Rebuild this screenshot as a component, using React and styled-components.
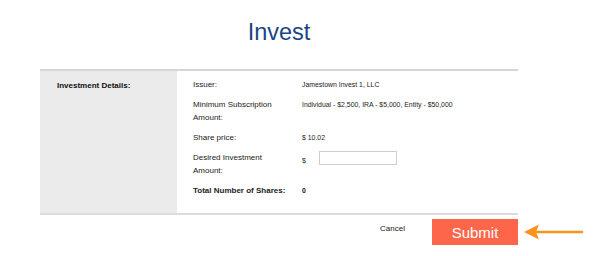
import React from "react";
import styled, { createGlobalStyle } from "styled-components";

const GlobalStyle = createGlobalStyle`
  body {
    margin: 0;
    background: #fff;
    font-family: "Liberation Sans", Arial, sans-serif;
    color: #111;
  }
`;

const Page = styled.div`
  width: 600px;
  height: 256px;
  padding-top: 17px;
  box-sizing: border-box;
`;

const Title = styled.h1`
  margin: 0 0 22px 0;
  width: 478px;
  margin-left: 40px;
  text-align: center;
  font-family: "Liberation Sans", Arial, sans-serif;
  font-weight: 400;
  font-size: 23.5px;
  line-height: 30px;
  color: #1a4585;
`;

const Card = styled.div`
  display: flex;
  width: 478px;
  margin-left: 40px;
  height: 146px;
  box-sizing: border-box;
  border-top: 2px solid #d6d6d6;
  border-bottom: 2px solid #dcdcdc;
`;

const Side = styled.div`
  width: 137px;
  background: #ebebeb;
  padding: 10px 0 0 17px;
  box-sizing: border-box;
  font-size: 8px;
  font-weight: bold;
`;

const Details = styled.div`
  flex: 1;
  display: grid;
  grid-template-columns: 109px 1fr;
  row-gap: 7px;
  align-content: start;
  padding: 7px 0 0 16px;
`;

const Label = styled.div`
  font-size: 8px;
  line-height: 13px;
  color: #222;
  font-weight: ${(p) => (p.$bold ? "bold" : "normal")};
`;

const Value = styled.div`
  display: flex;
  align-items: flex-start;
  font-size: 6.9px;
  line-height: 13px;
  color: #222;
  font-weight: ${(p) => (p.$bold ? "bold" : "normal")};
`;

const Currency = styled.span`
  margin-top: 3px;
`;

const AmountInput = styled.input`
  width: 78px;
  height: 14px;
  box-sizing: border-box;
  margin-left: 13px;
  border: 1px solid #cfcfcf;
  padding: 0 3px;
  font-size: 7px;
  outline: none;
`;

const Footer = styled.div`
  display: flex;
  justify-content: flex-end;
  align-items: flex-start;
  width: 478px;
  margin-left: 40px;
  margin-top: 4px;
`;

const CancelButton = styled.button`
  background: none;
  border: none;
  padding: 0;
  margin: 5px 27px 0 0;
  font-family: "Liberation Sans", Arial, sans-serif;
  font-size: 8px;
  color: #222;
  cursor: pointer;
`;

const SubmitWrap = styled.div`
  position: relative;
`;

const SubmitButton = styled.button`
  display: block;
  width: 86px;
  height: 26px;
  border: none;
  background: #fd664a;
  color: #fff;
  font-family: "Liberation Sans", Arial, sans-serif;
  font-size: 15px;
  cursor: pointer;
`;

const Arrow = styled.svg`
  position: absolute;
  left: 92px;
  top: 5px;
`;

const rows = [
  { label: "Issuer:", value: "Jamestown Invest 1, LLC" },
  {
    label: (
      <>
        Minimum Subscription
        <br />
        Amount:
      </>
    ),
    value: "Individual - $2,500, IRA - $5,000, Entity - $50,000",
  },
  { label: "Share price:", value: "$ 10.02" },
];

export default function App() {
  return (
    <Page>
      <GlobalStyle />
      <Title>Invest</Title>
      <Card>
        <Side>Investment Details:</Side>
        <Details>
          {rows.map((r, i) => (
            <React.Fragment key={i}>
              <Label>{r.label}</Label>
              <Value>{r.value}</Value>
            </React.Fragment>
          ))}
          <Label>
            Desired Investment
            <br />
            Amount:
          </Label>
          <Value>
            <Currency>$</Currency>
            <AmountInput type="text" />
          </Value>
          <Label $bold>Total Number of Shares:</Label>
          <Value $bold>0</Value>
        </Details>
      </Card>
      <Footer>
        <CancelButton>Cancel</CancelButton>
        <SubmitWrap>
          <SubmitButton>Submit</SubmitButton>
          <Arrow width="60" height="16" viewBox="0 0 60 16">
            <line x1="10" y1="8" x2="59" y2="8" stroke="#f7931e" strokeWidth="2.5" />
            <path d="M0 8 L15 0.5 L12 8 L15 15.5 Z" fill="#f7931e" />
          </Arrow>
        </SubmitWrap>
      </Footer>
    </Page>
  );
}
